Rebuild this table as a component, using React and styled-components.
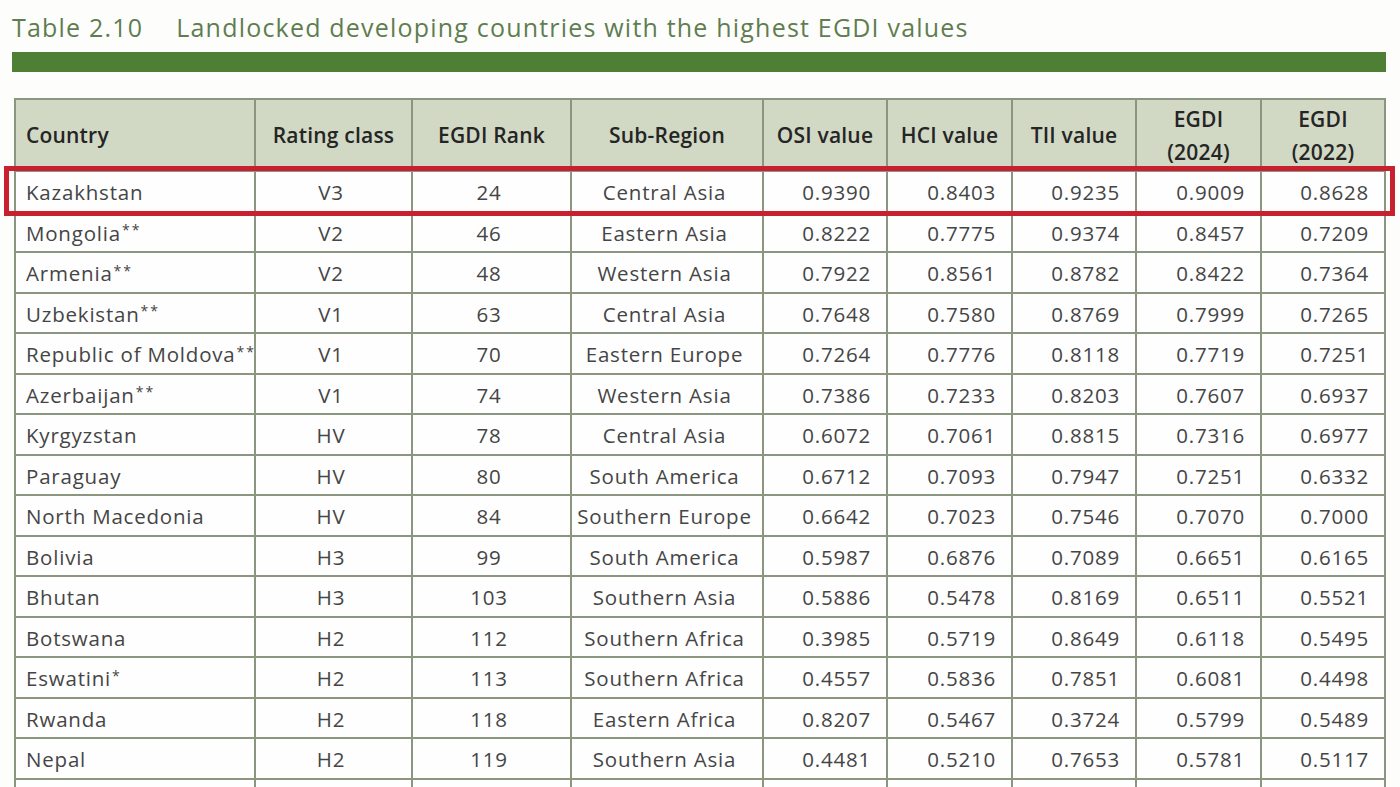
import React from 'react';
import styled, { createGlobalStyle } from 'styled-components';

const COLS = '240px 157px 159px 192px 124px 125px 124px 125px 124px';

const headers = [
	{ label: 'Country', align: 'left' },
	{ label: 'Rating class' },
	{ label: 'EGDI Rank' },
	{ label: 'Sub-Region' },
	{ label: 'OSI value' },
	{ label: 'HCI value' },
	{ label: 'TII value' },
	{ label: ['EGDI', '(2024)'] },
	{ label: ['EGDI', '(2022)'] },
];

const rows = [
	['Kazakhstan', 'V3', '24', 'Central Asia', '0.9390', '0.8403', '0.9235', '0.9009', '0.8628'],
	['Mongolia**', 'V2', '46', 'Eastern Asia', '0.8222', '0.7775', '0.9374', '0.8457', '0.7209'],
	['Armenia**', 'V2', '48', 'Western Asia', '0.7922', '0.8561', '0.8782', '0.8422', '0.7364'],
	['Uzbekistan**', 'V1', '63', 'Central Asia', '0.7648', '0.7580', '0.8769', '0.7999', '0.7265'],
	['Republic of Moldova**', 'V1', '70', 'Eastern Europe', '0.7264', '0.7776', '0.8118', '0.7719', '0.7251'],
	['Azerbaijan**', 'V1', '74', 'Western Asia', '0.7386', '0.7233', '0.8203', '0.7607', '0.6937'],
	['Kyrgyzstan', 'HV', '78', 'Central Asia', '0.6072', '0.7061', '0.8815', '0.7316', '0.6977'],
	['Paraguay', 'HV', '80', 'South America', '0.6712', '0.7093', '0.7947', '0.7251', '0.6332'],
	['North Macedonia', 'HV', '84', 'Southern Europe', '0.6642', '0.7023', '0.7546', '0.7070', '0.7000'],
	['Bolivia', 'H3', '99', 'South America', '0.5987', '0.6876', '0.7089', '0.6651', '0.6165'],
	['Bhutan', 'H3', '103', 'Southern Asia', '0.5886', '0.5478', '0.8169', '0.6511', '0.5521'],
	['Botswana', 'H2', '112', 'Southern Africa', '0.3985', '0.5719', '0.8649', '0.6118', '0.5495'],
	['Eswatini*', 'H2', '113', 'Southern Africa', '0.4557', '0.5836', '0.7851', '0.6081', '0.4498'],
	['Rwanda', 'H2', '118', 'Eastern Africa', '0.8207', '0.5467', '0.3724', '0.5799', '0.5489'],
	['Nepal', 'H2', '119', 'Southern Asia', '0.4481', '0.5210', '0.7653', '0.5781', '0.5117'],
	['', '', '', '', '', '', '', '', ''],
];

const alignFor = (i) => (i === 0 ? 'left' : i < 4 ? 'center' : 'right');

// country names carry footnote stars, drawn small like the print
const CountryName = ({ text }) => {
	const m = text.match(/^(.*?)(\*+)$/);
	if (!m) return text;
	return (
		<>
			{m[1]}
			<Stars>{m[2]}</Stars>
		</>
	);
};

const GlobalStyle = createGlobalStyle`
	html, body {
		margin: 0;
		background: #fdfdfc;
		overflow: hidden;
	}
	body {
		font-family: 'Open Sans', 'Noto Sans', sans-serif;
	}
`;

const App = () => (
	<Page>
		<GlobalStyle />
		<Title>
			<span>Table 2.10</span>
			<span>Landlocked developing countries with the highest EGDI values</span>
		</Title>
		<GreenBar />
		<Table>
			<HeadRow>
				{headers.map((h, i) => (
					<HeadCell key={i} $align={h.align}>
						{Array.isArray(h.label) ? (
							<Stack>
								{h.label.map((l) => (
									<span key={l}>{l}</span>
								))}
							</Stack>
						) : (
							h.label
						)}
					</HeadCell>
				))}
			</HeadRow>
			{rows.map((r, ri) => (
				<Row key={ri} $highlight={ri === 0}>
					{r.map((c, ci) => (
						<Cell key={ci} $align={alignFor(ci)}>
							{ci === 0 ? <CountryName text={c} /> : c}
						</Cell>
					))}
				</Row>
			))}
		</Table>
	</Page>
);

export default App;

const Page = styled.div`
	padding: 10px 14px 0 12px;
	box-sizing: border-box;
	width: 1400px;
`;

const Title = styled.h2`
	margin: 0;
	display: flex;
	gap: 33px;
	font-weight: 400;
	font-size: 25px;
	line-height: 34px;
	letter-spacing: 1.2px;
	color: #5f7d50;
`;

const GreenBar = styled.div`
	margin-top: 8px;
	height: 20px;
	width: 1374px;
	background: #4f7e35;
`;

const Table = styled.div`
	margin: 26px 0 0 2px;
	width: 1370px;
	border-top: 2px solid #8a9680;
	border-left: 2px solid #8a9680;
`;

const HeadRow = styled.div`
	display: grid;
	grid-template-columns: ${COLS};
	height: 72px;
	background: #d1d8c4;
`;

const HeadCell = styled.div`
	display: flex;
	align-items: center;
	justify-content: ${(p) => (p.$align === 'left' ? 'flex-start' : 'center')};
	padding: 0 10px;
	border-right: 2px solid #8a9680;
	border-bottom: 2px solid #8a9680;
	font-size: 21px;
	font-weight: 600;
	letter-spacing: 0.2px;
	color: #252525;
	white-space: nowrap;
`;

const Stack = styled.div`
	display: flex;
	flex-direction: column;
	align-items: center;
	line-height: 33px;
	padding-top: 2px;
`;

const Row = styled.div`
	position: relative;
	z-index: ${(p) => (p.$highlight ? 2 : 'auto')};
	display: grid;
	grid-template-columns: ${COLS};
	height: 40.5px;
	${(p) =>
		p.$highlight &&
		`
		&::after {
			content: '';
			position: absolute;
			left: -12px;
			right: -9px;
			top: -6px;
			bottom: -3px;
			border: 5px solid #c8202e;
			pointer-events: none;
		}
	`}
`;

const Cell = styled.div`
	display: flex;
	align-items: center;
	justify-content: ${(p) =>
		p.$align === 'left' ? 'flex-start' : p.$align === 'right' ? 'flex-end' : 'center'};
	padding: 2px 15px 0 10px;
	border-right: 2px solid #8a9680;
	border-bottom: 2px solid #8a9680;
	box-sizing: border-box;
	font-size: 20.5px;
	letter-spacing: 0.8px;
	color: #454545;
	white-space: nowrap;
	background: #fefefe;
`;

const Stars = styled.span`
	font-size: 14px;
	letter-spacing: 2px;
	margin-left: 1px;
	position: relative;
	top: -3px;
`;
